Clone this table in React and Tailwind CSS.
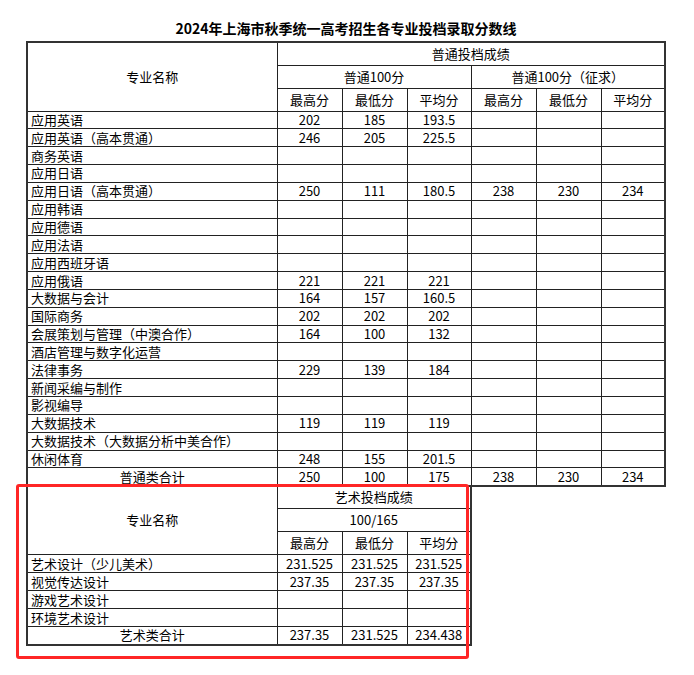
const general = [
  ['应用英语', '202', '185', '193.5'],
  ['应用英语（高本贯通）', '246', '205', '225.5'],
  ['商务英语'],
  ['应用日语'],
  ['应用日语（高本贯通）', '250', '111', '180.5', '238', '230', '234'],
  ['应用韩语'],
  ['应用德语'],
  ['应用法语'],
  ['应用西班牙语'],
  ['应用俄语', '221', '221', '221'],
  ['大数据与会计', '164', '157', '160.5'],
  ['国际商务', '202', '202', '202'],
  ['会展策划与管理（中澳合作）', '164', '100', '132'],
  ['酒店管理与数字化运营'],
  ['法律事务', '229', '139', '184'],
  ['新闻采编与制作'],
  ['影视编导'],
  ['大数据技术', '119', '119', '119'],
  ['大数据技术（大数据分析中美合作）'],
  ['休闲体育', '248', '155', '201.5'],
];

const art = [
  ['艺术设计（少儿美术）', '231.525', '231.525', '231.525'],
  ['视觉传达设计', '237.35', '237.35', '237.35'],
  ['游戏艺术设计'],
  ['环境艺术设计'],
];

const td = 'border border-[#222] p-0 text-center align-middle leading-[16px]';
const name = 'border border-[#222] p-0 pl-[3px] text-left align-middle leading-[16px] whitespace-nowrap';

function Cells({ row, count }) {
  return Array.from({ length: count }, (_, i) => (
    <td key={i} className={td}>{row[i + 1] || ''}</td>
  ));
}

export default function App() {
  return (
    <div
      className="relative w-[694px] h-[675px] bg-white text-black text-[13px]"
      style={{ fontFamily: '"Noto Sans CJK SC", "Noto Sans", sans-serif' }}
    >
      <div className="pl-[26px] pt-[18px]">
        <div className="w-[640px] h-[20px] mb-[3px] text-center text-[14px] font-bold leading-[20px]">
          2024年上海市秋季统一高考招生各专业投档录取分数线
        </div>

        {/* 普通类 */}
        <table className="border-collapse table-fixed border-2 border-[#333] w-[640px]">
          <colgroup>
            <col className="w-[250px]" />
            <col className="w-[65px]" />
            <col className="w-[65px]" />
            <col className="w-[64px]" />
            <col className="w-[65px]" />
            <col className="w-[65px]" />
            <col className="w-[64px]" />
          </colgroup>
          <thead>
            <tr className="h-[23px]">
              <td rowSpan={3} className={td}>专业名称</td>
              <td colSpan={6} className={td}>普通投档成绩</td>
            </tr>
            <tr className="h-[23px]">
              <td colSpan={3} className={td}>普通100分</td>
              <td colSpan={3} className={td}>普通100分（征求）</td>
            </tr>
            <tr className="h-[23px]">
              <td className={td}>最高分</td>
              <td className={td}>最低分</td>
              <td className={td}>平均分</td>
              <td className={td}>最高分</td>
              <td className={td}>最低分</td>
              <td className={td}>平均分</td>
            </tr>
          </thead>
          <tbody>
            {general.map((row) => (
              <tr key={row[0]} className="h-[17.85px]">
                <td className={name}>{row[0]}</td>
                <Cells row={row} count={6} />
              </tr>
            ))}
            <tr className="h-[17.85px]">
              <td className={td}>普通类合计</td>
              <Cells row={['', '250', '100', '175', '238', '230', '234']} count={6} />
            </tr>
          </tbody>
        </table>

        {/* 艺术类 */}
        <table className="border-collapse table-fixed border-2 border-[#333] w-[446px] -mt-[2px]">
          <colgroup>
            <col className="w-[250px]" />
            <col className="w-[65px]" />
            <col className="w-[65px]" />
            <col className="w-[64px]" />
          </colgroup>
          <thead>
            <tr className="h-[23px]">
              <td rowSpan={3} className={td}>专业名称</td>
              <td colSpan={3} className={td}>艺术投档成绩</td>
            </tr>
            <tr className="h-[23px]">
              <td colSpan={3} className={td}>100/165</td>
            </tr>
            <tr className="h-[23px]">
              <td className={td}>最高分</td>
              <td className={td}>最低分</td>
              <td className={td}>平均分</td>
            </tr>
          </thead>
          <tbody>
            {art.map((row) => (
              <tr key={row[0]} className="h-[18px]">
                <td className={name}>{row[0]}</td>
                <Cells row={row} count={3} />
              </tr>
            ))}
            <tr className="h-[18px]">
              <td className={td}>艺术类合计</td>
              <Cells row={['', '237.35', '231.525', '234.438']} count={3} />
            </tr>
          </tbody>
        </table>
      </div>

      {/* red annotation box */}
      <div className="absolute left-[16px] top-[484px] w-[453px] h-[175px] border-[3px] border-[#ff2626] rounded-[3px]" />
    </div>
  );
}
